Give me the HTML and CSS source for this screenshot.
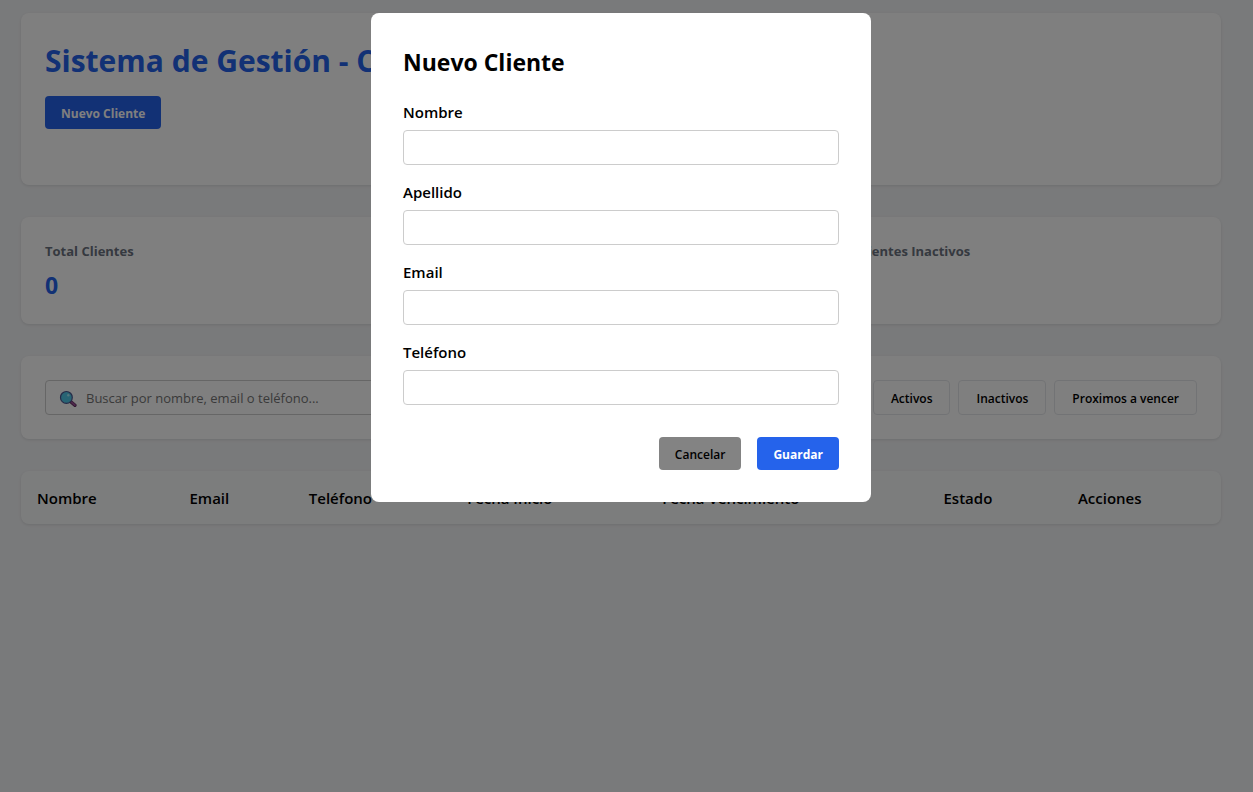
FILE: index.html
```html
<!DOCTYPE html>
<html lang="es">
<head>
<meta charset="utf-8">
<meta name="viewport" content="width=device-width, initial-scale=1">
<title>Sistema de Gestión - Clientes</title>
<link rel="stylesheet" href="styles.css">
</head>
<body>
<main class="container">
  <header class="card header">
    <h1 class="title">Sistema de Gestión - Clientes</h1>
    <button class="btn btn-primary" type="button">Nuevo Cliente</button>
  </header>

  <section class="card stats">
    <div class="stat"><h2 class="stat-label">Total Clientes</h2><p class="stat-value">0</p></div>
    <div class="stat"><h2 class="stat-label">Clientes Activos</h2><p class="stat-value">0</p></div>
    <div class="stat"><h2 class="stat-label">Clientes Inactivos</h2><p class="stat-value">0</p></div>
  </section>

  <section class="card toolbar">
    <div class="search">
      <svg class="search-icon" viewBox="0 0 18 18" aria-hidden="true">
        <path d="M11.2 11.2l4.7 4.1" stroke="#5a2d5b" stroke-width="3.4" stroke-linecap="round"/>
        <path d="M12.6 12.2l3.2 2.8" stroke="#9b4f96" stroke-width="2" stroke-linecap="round"/>
        <circle cx="7.4" cy="7.4" r="5.9" fill="#50c8e8" stroke="#4a5590" stroke-width="1.2"/>
        <circle cx="9.3" cy="5.2" r="1.2" fill="#a8ecfa"/>
      </svg>
      <input class="input search-input" type="search" aria-label="Buscar" placeholder="Buscar por nombre, email o teléfono...">
    </div>
    <div class="filters">
      <button class="btn btn-filter" type="button">Todos</button>
      <button class="btn btn-filter" type="button">Activos</button>
      <button class="btn btn-filter" type="button">Inactivos</button>
      <button class="btn btn-filter" type="button">Proximos a vencer</button>
    </div>
  </section>

  <table class="table">
    <thead>
      <tr>
        <th>Nombre</th><th>Email</th><th>Teléfono</th><th>Fecha Inicio</th><th>Fecha Vencimiento</th><th>Estado</th><th>Acciones</th>
      </tr>
    </thead>
  </table>
</main>

<div class="overlay">
  <form class="modal" role="dialog" aria-modal="true" aria-labelledby="modal-title">
    <h2 class="modal-title" id="modal-title">Nuevo Cliente</h2>
    <div class="field"><label class="label" for="nombre">Nombre</label><input class="input" id="nombre" type="text"></div>
    <div class="field"><label class="label" for="apellido">Apellido</label><input class="input" id="apellido" type="text"></div>
    <div class="field"><label class="label" for="email">Email</label><input class="input" id="email" type="email"></div>
    <div class="field"><label class="label" for="telefono">Teléfono</label><input class="input" id="telefono" type="tel"></div>
    <div class="actions">
      <button class="btn btn-cancel" type="button">Cancelar</button>
      <button class="btn btn-primary" type="submit">Guardar</button>
    </div>
  </form>
</div>
</body>
</html>
```
FILE: styles.css
```css
* { box-sizing: border-box; margin: 0; padding: 0; }

body {
  min-height: 100vh;
  padding: 13px 11px 32px 0;
  background: #f3f4f6;
  color: #000;
  font: 15px/21px "Open Sans", "Noto Sans", sans-serif;
}

.container {
  display: flex;
  flex-direction: column;
  gap: 32px;
  max-width: 1200px;
  margin: 0 auto;
}

.card {
  padding: 24px;
  background: #fff;
  border-radius: 8px;
  box-shadow: 0 1px 3px rgba(0, 0, 0, 0.1);
}

.header { padding-bottom: 56px; }

.title {
  margin-bottom: 12px;
  color: #2563eb;
  font-size: 30px;
  line-height: 47px;
}

.btn {
  padding: 9px 16px 7px;
  border: 0;
  border-radius: 4px;
  font: 600 12px/17px "Open Sans", "Noto Sans", sans-serif;
  white-space: nowrap;
  color: #000;
}

.btn-primary { background: #2563eb; color: #fff; font-weight: 700; }
.btn-cancel { background: #838383; }
.btn-filter { padding: 9px 17px 7px; background: #fff; border: 1px solid #e5e7eb; }

.stats {
  display: grid;
  grid-template-columns: repeat(3, 1fr);
  gap: 64px;
  padding-bottom: 23px;
}

.stat-label {
  margin-bottom: 7px;
  color: #6b7280;
  font-size: 13px;
  line-height: 21px;
}

.stat-value {
  color: #2563eb;
  font-size: 23px;
  font-weight: 700;
  line-height: 32px;
}

.toolbar { display: flex; gap: 16px; }
.search { position: relative; flex: 1; }

.search-icon {
  position: absolute;
  top: 10px;
  left: 14px;
  width: 18px;
  height: 18px;
  fill: none;
}

.input {
  display: block;
  width: 100%;
  padding: 8px;
  border: 1px solid #ccc;
  border-radius: 4px;
  background: #fff;
  font: 13px/17px "Open Sans", "Noto Sans", sans-serif;
  height: 35px;
}

.search-input { padding-left: 40px; appearance: none; }
.search-input::placeholder { color: #757575; }

.filters { display: flex; gap: 8px; }

.table {
  width: 100%;
  border-spacing: 0;
  background: #f9fafb;
  border-radius: 8px;
  box-shadow: 0 1px 3px rgba(0, 0, 0, 0.1);
}

.table th {
  padding: 17px 16px 15px;
  font-weight: 600;
  text-align: left;
}

.overlay {
  position: fixed;
  inset: 0;
  display: flex;
  align-items: flex-start;
  justify-content: center;
  padding: 13px 11px 13px 0;
  background: rgba(0, 0, 0, 0.5);
}

.modal {
  width: 100%;
  max-width: 500px;
  padding: 32px;
  background: #fff;
  border-radius: 8px;
}

.modal-title {
  margin-bottom: 21px;
  font-size: 23px;
  line-height: 35px;
}

.field { margin-bottom: 16px; }

.label {
  display: block;
  margin-bottom: 6px;
  font-weight: 600;
  line-height: 23px;
}

.actions {
  display: flex;
  justify-content: flex-end;
  gap: 16px;
  margin-top: 32px;
}
```
